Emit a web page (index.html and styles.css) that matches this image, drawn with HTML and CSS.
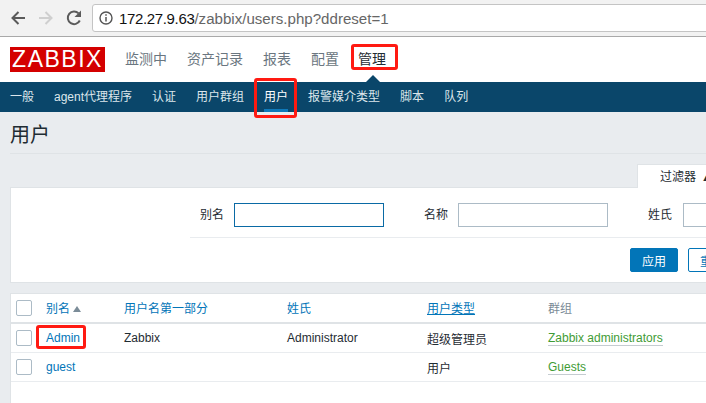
FILE: index.html
```html
<!DOCTYPE html>
<html lang="zh">
<head>
<meta charset="utf-8">
<title>用户</title>
<link rel="stylesheet" href="styles.css">
</head>
<body>
<div class="toolbar">
  <svg class="tb-icon" width="16" height="16" viewBox="0 0 16 16"><path d="M15 8H2.500M8.500 2 2.500 8l6 6" fill="none" stroke="#5a5a5a" stroke-width="2"/></svg>
  <svg class="tb-icon" width="16" height="16" viewBox="0 0 16 16"><path d="M1 8h12.500M7.500 2l6 6-6 6" fill="none" stroke="#cfcfcf" stroke-width="2"/></svg>
  <svg class="tb-icon" width="16" height="16" viewBox="0 0 16 16"><path d="M13.800 10.500A6.300 6.300 0 1 1 12.600 3.400" fill="none" stroke="#5a5a5a" stroke-width="2"/><path d="M15 0.500V7H8.500z" fill="#5a5a5a"/></svg>
  <div class="url">
    <svg width="14" height="14" viewBox="0 0 14 14"><circle cx="7" cy="7" r="6" fill="none" stroke="#555" stroke-width="1.400"/><path d="M7 6v4.500M7 3.300v1.500" stroke="#555" stroke-width="1.500"/></svg>
    <span class="host">172.27.9.63</span><span class="path">/zabbix/users.php?ddreset=1</span>
  </div>
</div>
<header class="top">
  <div class="logo">ZABBIX</div>
  <nav class="main-nav">
    <a>监测中</a><a>资产记录</a><a>报表</a><a>配置</a><a class="active">管理</a>
  </nav>
  <span class="caret"></span>
</header>
<nav class="sub-nav">
  <a>一般</a><a>agent代理程序</a><a>认证</a><a>用户群组</a><a class="current">用户</a><a>报警媒介类型</a><a>脚本</a><a>队列</a>
</nav>
<main class="content">
  <h1>用户</h1>
  <div class="tab-row"><div class="tab">过滤器 <span class="tri">▲</span></div></div>
  <section class="filter">
    <div class="fields">
      <label class="lbl-a">别名</label><input class="input focus">
      <label class="lbl-b">名称</label><input class="input">
      <label class="lbl-c">姓氏</label><input class="input">
    </div>
    <div class="actions">
      <button class="btn primary">应用</button><button class="btn">重设</button>
    </div>
  </section>
  <section class="list">
    <div class="row head">
      <span class="check"></span>
      <span class="c1 link">别名 <i class="sort"></i></span>
      <span class="c2 link">用户名第一部分</span>
      <span class="c3 link">姓氏</span>
      <span class="c4 link under">用户类型</span>
      <span class="c5 muted">群组</span>
    </div>
    <div class="row">
      <span class="check"></span>
      <span class="c1 link">Admin</span>
      <span class="c2">Zabbix</span>
      <span class="c3">Administrator</span>
      <span class="c4">超级管理员</span>
      <span class="c5"><span class="group">Zabbix administrators</span></span>
    </div>
    <div class="row">
      <span class="check"></span>
      <span class="c1 link">guest</span>
      <span class="c2"></span>
      <span class="c3"></span>
      <span class="c4">用户</span>
      <span class="c5"><span class="group">Guests</span></span>
    </div>
  </section>
</main>
<div class="mark m-admin"></div>
<div class="mark m-user"></div>
<div class="mark m-row"></div>
</body>
</html>
```
FILE: styles.css
```css
* { box-sizing: border-box; }
html, body { margin: 0; height: 403px; overflow: hidden; }
body {
  position: relative;
  width: 706px;
  background: #fff;
  font: 12px "Liberation Sans", "Noto Sans CJK SC", sans-serif;
  color: #1f2c33;
}
.toolbar {
  height: 37px;
  background: #f2f2f2;
  border-bottom: 1px solid #a9a9a9;
  display: flex;
  align-items: center;
  padding: 0 0 0 10px;
  gap: 12px;
}
.tb-icon { flex: none; }
.url {
  margin-left: -2px;
  width: 640px;
  height: 28px;
  flex: none;
  background: #fff;
  border: 1px solid #c4c4c4;
  border-radius: 3px;
  display: flex;
  align-items: center;
  padding-left: 6px;
  font-size: 15.100px;
  white-space: nowrap;
}
.url svg { margin-right: 6px; flex: none; }
.host { color: #111; font-size: 15px; letter-spacing: -0.350px; }
.path { color: #666; }
.top {
  position: relative;
  height: 45px;
  display: flex;
  align-items: center;
  padding: 0 0 0 10px;
  background: #fff;
}
.logo {
  width: 95px;
  height: 25px;
  background: #d40000;
  color: #fff;
  font-size: 23px;
  line-height: 25px;
  text-align: center;
  letter-spacing: 1.500px;
}
.main-nav { display: flex; margin: -4px 0 0 20px; font-size: 14px; color: #6a7680; }
.main-nav a { margin-right: 20px; white-space: nowrap; }
.main-nav .active { color: #1f2c33; margin-left: -1px; }
.caret {
  position: absolute;
  left: 366px;
  bottom: 0;
  border: 7px solid transparent;
  border-top-width: 0;
  border-bottom-color: #0a466a;
}
.sub-nav {
  height: 30px;
  background: #0a466a;
  display: flex;
  align-items: center;
  padding-left: 10px;
  gap: 20px;
  color: #dce6ec;
  white-space: nowrap;
}
.sub-nav a { position: relative; line-height: 30px; }
.sub-nav .current { color: #fff; }
.sub-nav .current::after {
  content: "";
  position: absolute;
  left: 0;
  right: 0;
  bottom: 0;
  height: 3px;
  background: #0f79b9;
}
.content { height: 291px; background: #e9ecef; padding: 0 0 0 10px; overflow: hidden; }
h1 {
  margin: 0;
  height: 42px;
  font-size: 20px;
  font-weight: 400;
  line-height: 47px;
  border-bottom: 1px solid #dfe3e6;
  color: #1f2c33;
}
.tab-row { height: 33px; padding-top: 10px; display: flex; justify-content: flex-end; }
.tab {
  flex: none;
  width: 69px;
  height: 24px;
  background: #fff;
  border: 1px solid #dfe3e6;
  border-bottom: 0;
  border-right: 0;
  padding-left: 22px;
  line-height: 25px;
  white-space: nowrap;
  position: relative;
  z-index: 1;
}
.tri { font-size: 10px; margin-left: 2px; }
.filter {
  height: 96px;
  background: #fff;
  border: 1px solid #dfe3e6;
  border-right: 0;
  padding-top: 15px;
}
.fields {
  height: 35px;
  margin-left: 179px;
  border-bottom: 1px solid #e9ecef;
  display: flex;
  align-items: flex-start;
  white-space: nowrap;
}
.fields label { line-height: 24px; margin-right: 10px; flex: none; }
.lbl-a { margin-left: 10px; }
.lbl-b { margin-left: 40px; }
.fields .lbl-c { margin-left: 40px; margin-right: 11px; }
.input {
  flex: none;
  width: 150px;
  height: 24px;
  border: 1px solid #acbbc6;
  background: #fff;
  padding: 0;
  border-radius: 0;
}
.input.focus { border-color: #0a6aa5; }
.actions {
  display: flex;
  gap: 10px;
  margin: 10px 0 0 619px;
  white-space: nowrap;
}
.btn {
  flex: none;
  width: 48px;
  height: 24px;
  padding: 0;
  border: 1px solid #0275b8;
  border-radius: 2px;
  background: #fff;
  color: #0275b8;
  font: inherit;
}
.btn.primary { background: #0275b8; color: #fff; }
.list {
  height: 120px;
  margin-top: 10px;
  background: #fff;
  border: 1px solid #dfe3e6;
  border-right: 0;
  border-bottom: 0;
}
.row {
  height: 29px;
  display: flex;
  align-items: center;
  padding-left: 5px;
  border-bottom: 1px solid #e9ecef;
  white-space: nowrap;
}
.row.head { height: 30px; border-bottom: 2px solid #dfe3e6; }
.head span:not(.check) { margin-top: -2px; }
.check {
  flex: none;
  width: 16px;
  height: 16px;
  border: 1px solid #acbbc6;
  border-radius: 2px;
  background: #fff;
  margin-right: 14px;
}
.c1 { width: 78px; flex: none; }
.c2 { width: 163px; flex: none; }
.c3 { width: 140px; flex: none; }
.c4 { width: 121px; flex: none; }
.c5 { flex: none; }
.link { color: #0275b8; }
.under { text-decoration: underline; text-underline-offset: 1px; }
.muted { color: #7a8a96; }
.group { color: #3f9c35; border-bottom: 1px solid #c5ccd1; }
.sort {
  display: inline-block;
  border: 4px solid transparent;
  border-top-width: 0;
  border-bottom: 6px solid #7b8c98;
  vertical-align: 1px;
}
.mark {
  position: absolute;
  border: 3px solid #ff1a12;
  border-radius: 3px;
  pointer-events: none;
}
.m-admin { left: 351px; top: 44px; width: 47px; height: 26px; }
.m-user { left: 254px; top: 78px; width: 43px; height: 40px; }
.m-row { left: 36px; top: 325px; width: 50px; height: 24px; }
```
